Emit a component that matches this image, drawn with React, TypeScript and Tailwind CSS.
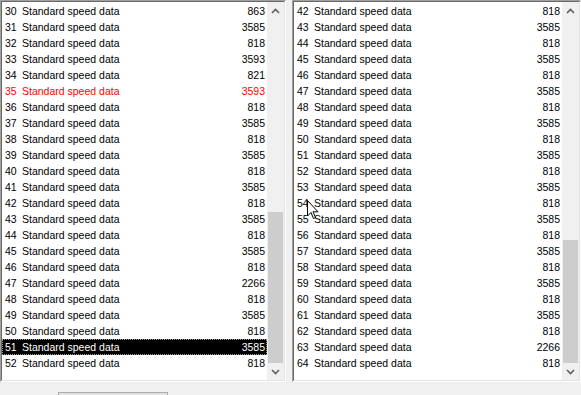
import { useMemo } from 'react';

type Row = { id: number; value: number };

const leftRows: Row[] = [
  [30, 863], [31, 3585], [32, 818], [33, 3593], [34, 821], [35, 3593],
  [36, 818], [37, 3585], [38, 818], [39, 3585], [40, 818], [41, 3585],
  [42, 818], [43, 3585], [44, 818], [45, 3585], [46, 818], [47, 2266],
  [48, 818], [49, 3585], [50, 818], [51, 3585], [52, 818],
].map(([id, value]) => ({ id, value }));

const rightRows: Row[] = [
  [42, 818], [43, 3585], [44, 818], [45, 3585], [46, 818], [47, 3585],
  [48, 818], [49, 3585], [50, 818], [51, 3585], [52, 818], [53, 3585],
  [54, 818], [55, 3585], [56, 818], [57, 3585], [58, 818], [59, 3585],
  [60, 818], [61, 3585], [62, 818], [63, 2266], [64, 818],
].map(([id, value]) => ({ id, value }));

function Chevron({ up }: { up?: boolean }) {
  return (
    <svg width="9" height="6" viewBox="0 0 9 6" className="block">
      <path
        d={up ? 'M1 5 L4.5 1.5 L8 5' : 'M1 1 L4.5 4.5 L8 1'}
        fill="none"
        stroke="#606060"
        strokeWidth="1.6"
      />
    </svg>
  );
}

function ScrollBar({ thumbTop }: { thumbTop: number }) {
  // thumbTop is measured from the top of the track
  return (
    <div className="w-[17px] h-full bg-[#f0f0f0] flex flex-col shrink-0">
      <div className="h-[17px] flex items-center justify-center shrink-0">
        <Chevron up />
      </div>
      <div className="flex-1 flex flex-col">
        <div style={{ height: thumbTop }} className="shrink-0" />
        <div className="flex-1 bg-[#cdcdcd] mx-[1px]" />
      </div>
      <div className="h-[17px] flex items-center justify-center shrink-0">
        <Chevron />
      </div>
    </div>
  );
}

function ListRow({ row, red, selected }: { row: Row; red?: boolean; selected?: boolean }) {
  const color = selected ? 'text-white' : red ? 'text-[#ff0000]' : 'text-black';
  return (
    <div
      className={`h-4 flex items-center pl-[3px] pr-[2px] ${color} ${
        selected ? 'bg-black outline-1 outline-dotted outline-[#9a9a9a] -outline-offset-1' : ''
      }`}
    >
      <span className="w-[17px]">{row.id}</span>
      <span className="flex-1">Standard speed data</span>
      <span>{row.value}</span>
    </div>
  );
}

function ListBox({
  rows,
  width,
  thumbTop,
  redId,
  selectedId,
}: {
  rows: Row[];
  width: string;
  thumbTop: number;
  redId?: number;
  selectedId?: number;
}) {
  return (
    <div className={`${width} h-[382px] border border-t-[#a0a0a0] border-l-[#a0a0a0] border-r-white border-b-white`}>
      <div className="h-full border border-t-[#696969] border-l-[#696969] border-r-[#e3e3e3] border-b-[#e3e3e3] bg-white flex">
        <div className="flex-1 pt-[1px] overflow-hidden">
          {rows.map((r) => (
            <ListRow key={r.id} row={r} red={r.id === redId} selected={r.id === selectedId} />
          ))}
        </div>
        <ScrollBar thumbTop={thumbTop} />
      </div>
    </div>
  );
}

export default function App() {
  const font = useMemo(() => ({ fontFamily: '"Liberation Sans", Arial, sans-serif' }), []);
  return (
    <div
      className="relative w-[581px] h-[395px] overflow-hidden bg-[#f0f0f0] text-[10.5px] leading-none"
      style={font}
    >
      <div className="flex">
        <ListBox rows={leftRows} width="w-[286px]" thumbTop={193} redId={35} selectedId={51} />
        <div className="w-[6px]" />
        <ListBox rows={rightRows} width="w-[289px]" thumbTop={221} />
      </div>
      <div className="pl-[58px] pt-[10px]">
        <div className="w-[110px] h-[24px] border border-[#adadad] bg-[#e1e1e1]" />
      </div>

      {/* mouse pointer */}
      <svg
        className="absolute left-[307px] top-[200px]"
        width="13"
        height="20"
        viewBox="0 0 13 20"
      >
        <path
          d="M0.5 0.5 L0.5 16 L4 12.5 L6.5 18.5 L8.5 17.5 L6 11.8 L11 11.8 Z"
          fill="white"
          stroke="black"
          strokeWidth="1"
        />
      </svg>
    </div>
  );
}
